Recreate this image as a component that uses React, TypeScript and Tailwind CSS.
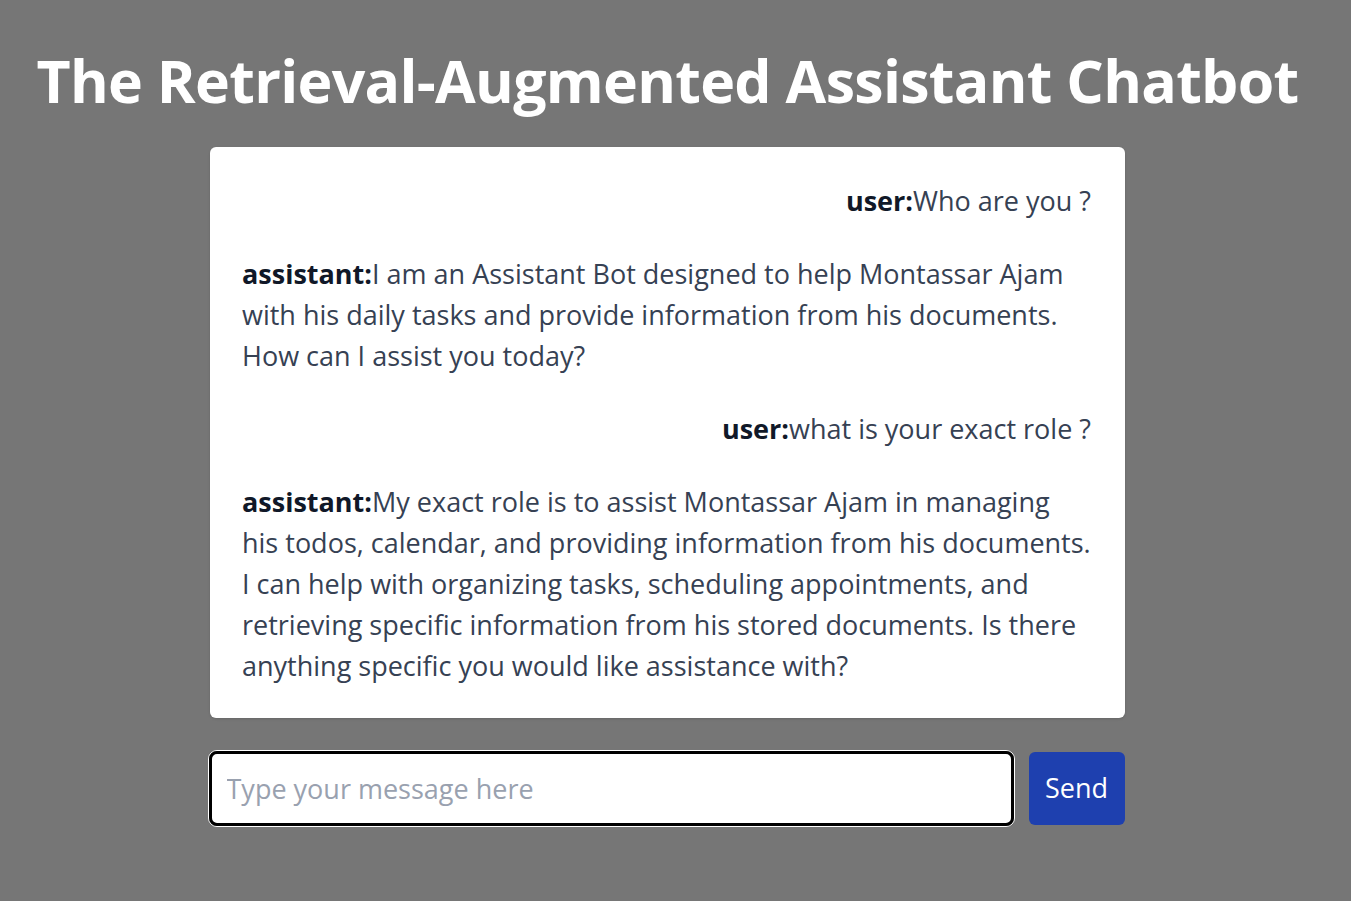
import { useState } from "react";

type Message = {
  role: "user" | "assistant";
  content: string;
};

const messages: Message[] = [
  { role: "user", content: "Who are you ?" },
  {
    role: "assistant",
    content:
      "I am an Assistant Bot designed to help Montassar Ajam with his daily tasks and provide information from his documents. How can I assist you today?",
  },
  { role: "user", content: "what is your exact role ?" },
  {
    role: "assistant",
    content:
      "My exact role is to assist Montassar Ajam in managing his todos, calendar, and providing information from his documents. I can help with organizing tasks, scheduling appointments, and retrieving specific information from his stored documents. Is there anything specific you would like assistance with?",
  },
];

export default function App() {
  const [input, setInput] = useState("");

  return (
    <div className="min-h-screen bg-[#767676] font-['Open_Sans',sans-serif] pr-4">
      <div className="flex flex-col items-center pt-[38px]">
        <h1 className="text-white font-bold text-[59px] leading-[84px] tracking-[-0.7px]">
          The Retrieval-Augmented Assistant Chatbot
        </h1>

        <div className="mt-[25px] w-[915px] bg-white rounded-md shadow-sm pl-8 pr-[34px] pt-[33px] pb-8 flex flex-col gap-8 text-[27px] leading-[41px] text-gray-700">
          {messages.map((m, i) => (
            <div key={i} className={m.role === "user" ? "text-right" : "text-left"}>
              <span className="font-bold text-gray-900">{m.role}:</span>
              {m.content}
            </div>
          ))}
        </div>

        <div className="mt-8 mr-[3px] w-[917px] flex items-center gap-[14px]">
          <div className="flex-1 rounded-[9px] border border-white">
            <input
              autoFocus
              value={input}
              onChange={(e) => setInput(e.target.value)}
              placeholder="Type your message here"
              className="w-full h-[75px] rounded-[8px] border-[3px] border-black bg-white pl-[15px] pr-4 text-[27px] text-gray-700 placeholder:text-gray-400 outline-none"
            />
          </div>
          <button className="w-[96px] h-[73px] rounded-md bg-[#1e40af] text-white text-[27px]">
            Send
          </button>
        </div>
      </div>
    </div>
  );
}
